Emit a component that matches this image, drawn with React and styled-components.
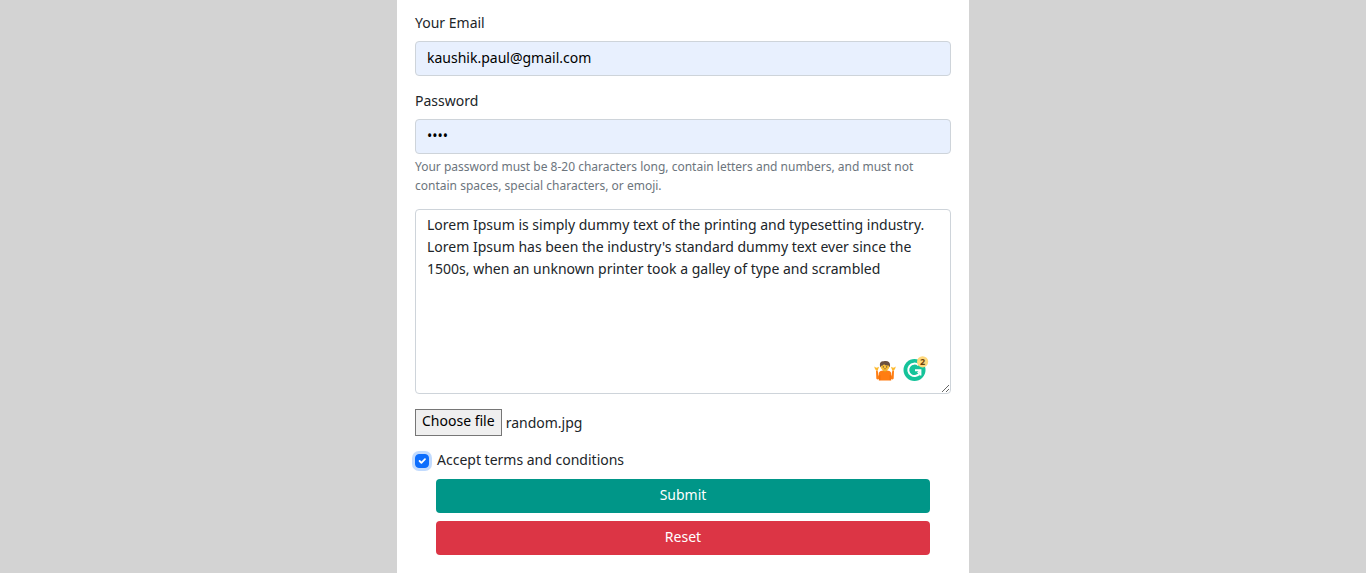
import React, { useState } from 'react';
import styled, { createGlobalStyle } from 'styled-components';

const GlobalStyle = createGlobalStyle`
  *, *::before, *::after { box-sizing: border-box; }
  body {
    margin: 0;
    background: #d3d3d3;
    color: #212529;
    font-family: "Noto Sans", "Open Sans", sans-serif;
    font-size: 14px;
    line-height: 22px;
  }
`;

const Page = styled.main`
  display: flex;
  justify-content: center;
  min-height: 100vh;
`;

const Form = styled.form`
  width: 100%;
  max-width: 572px;
  padding: 12px 18px 18px;
  background: #fff;
`;

const Field = styled.div`
  margin-bottom: 14px;
`;

const Label = styled.label`
  display: block;
  width: fit-content;
  margin-bottom: 7px;
`;

const Input = styled.input`
  display: block;
  width: 100%;
  height: 35px;
  padding: 0 11px 2px;
  border: 1px solid #ced4da;
  border-radius: 4px;
  background: #e8f0fe;
  color: #000;
  font: inherit;
  outline: none;
`;

const Help = styled.p`
  margin: 3px 0 14px;
  color: #6c757d;
  font-size: 12px;
  line-height: 19px;
`;

const MessageBox = styled.div`
  position: relative;
  margin-bottom: 15px;
`;

const Message = styled.textarea`
  display: block;
  width: 100%;
  height: 185px;
  padding: 4px 11px;
  border: 1px solid #ced4da;
  border-radius: 4px;
  background: #fff;
  color: #212529;
  font: inherit;
  resize: vertical;
  outline: none;
`;

const Helpers = styled.div`
  position: absolute;
  right: 22px;
  bottom: 12px;
  display: flex;
  align-items: flex-end;
  gap: 7px;
  pointer-events: none;

  svg { display: block; }
`;

const FileRow = styled.div`
  position: relative;
  display: flex;
  align-items: center;
  gap: 4px;
  margin-bottom: 13px;
`;

const FileInput = styled.input`
  position: absolute;
  width: 1px;
  height: 1px;
  overflow: hidden;
  opacity: 0;
`;

const FileButton = styled.label`
  height: 27px;
  padding: 0 6px;
  border: 1px solid #767676;
  background: #efefef;
  color: #000;
`;

const Terms = styled.div`
  display: flex;
  align-items: flex-end;
  gap: 8px;
  margin-bottom: 8px;
`;

const Checkbox = styled.input`
  appearance: none;
  flex: none;
  width: 14px;
  height: 14px;
  margin: 0 0 3px;
  border: 1px solid #adb5bd;
  border-radius: 4px;
  background: #fff center / 100% no-repeat;
  outline: none;

  &:checked {
    border-color: #0d6efd;
    background-color: #0d6efd;
    background-image: url("data:image/svg+xml,%3Csvg xmlns='http://www.w3.org/2000/svg' viewBox='0 0 20 20'%3E%3Cpath fill='none' stroke='%23fff' stroke-linecap='round' stroke-linejoin='round' stroke-width='3' d='M6 10l3 3l6-6'/%3E%3C/svg%3E");
    box-shadow: 0 0 0 3px rgba(13, 110, 253, 0.25);
  }
`;

const Actions = styled.div`
  display: grid;
  gap: 8px;
  padding: 0 21px;
`;

const Button = styled.button`
  height: 34px;
  padding: 0 11px 2px;
  border: 0;
  border-radius: 4px;
  background: ${({ $color }) => $color};
  color: #fff;
  font: inherit;
`;

const message = `Lorem Ipsum is simply dummy text of the printing and typesetting industry.
Lorem Ipsum has been the industry's standard dummy text ever since the
1500s, when an unknown printer took a galley of type and scrambled`;

function ShrugIcon() {
  return (
    <svg width="22" height="22" viewBox="0 0 22 22" aria-hidden="true">
      <path d="M4.8 20.5V12.8Q5.5 10.8 8.5 10.6H13.5Q16.5 10.8 17.2 12.8V20.5Z" fill="#ff7d12" />
      <path d="M5.6 12.6 4.6 16.2 3.6 10.2 2 10.4 2.3 18.6Q3.6 20.6 6.2 18ZM16.4 12.6 17.4 16.2 18.4 10.2 20 10.4 19.7 18.6Q18.4 20.6 15.8 18Z" fill="#ff7d12" />
      <path d="M3.8 10.2 2 10.5.8 8.6.2 6.6 1.8 7.6 3 7.8 4.6 6.8 4.8 7.4ZM18.2 10.2 20 10.5 21.2 8.6 21.8 6.6 20.2 7.6 19 7.8 17.4 6.8 17.2 7.4Z" fill="#fcb92d" />
      <path d="M9.2 9.5h3.6v1.6q-1.8 1.8-3.6 0Z" fill="#e8981c" />
      <ellipse cx="11" cy="6.4" rx="4.3" ry="4.4" fill="#fcc13a" />
      <path d="M6.4 7.6C5 3.6 6.4.9 9.6 1.3 13.8-.1 17.4 2.4 15.6 7.6L14.8 5.4Q11.4 5.8 10 4.2 8.8 5.8 7.2 5.8Z" fill="#6b5040" />
      <circle cx="9.3" cy="6.9" r=".6" fill="#49372c" />
      <circle cx="12.7" cy="6.9" r=".6" fill="#49372c" />
      <path d="M9.8 9q1.3-.6 2.5 0" fill="none" stroke="#714324" strokeWidth=".6" />
      <path d="M5.8 15v5.2M16.2 15v5.2" stroke="#e06305" strokeWidth=".5" />
    </svg>
  );
}

function CheckerIcon() {
  return (
    <svg width="26" height="26" viewBox="0 0 26 26" role="img" aria-label="2 suggestions">
      <circle cx="11.5" cy="14" r="11" fill="#15c39a" />
      <path d="M15.6 9.2A6.2 6.2 0 1 0 16.9 16.8" fill="none" stroke="#fff" strokeWidth="2" />
      <path d="M12 14.2H17.4V19.6" fill="none" stroke="#fff" strokeWidth="2" />
      <path d="M17.4 14.2 14.6 17" fill="none" stroke="#fff" strokeWidth="1.5" />
      <circle cx="19.6" cy="5.8" r="5.6" fill="#ffd87c" />
      <text x="19.6" y="9" textAnchor="middle" fontFamily="Noto Sans, sans-serif" fontSize="9" fontWeight="700" fill="#6b430f">2</text>
    </svg>
  );
}

export default function App() {
  const [fileName, setFileName] = useState('random.jpg');

  return (
    <>
      <GlobalStyle />
      <Page>
        <Form onSubmit={(e) => e.preventDefault()}>
          <Field>
            <Label htmlFor="email">Your Email</Label>
            <Input id="email" type="email" defaultValue="kaushik.paul@gmail.com" />
          </Field>
          <Label htmlFor="password">Password</Label>
          <Input id="password" type="password" defaultValue="pass" aria-describedby="password-help" />
          <Help id="password-help">
            Your password must be 8-20 characters long, contain letters and numbers, and must not
            <br />
            contain spaces, special characters, or emoji.
          </Help>
          <MessageBox>
            <Message aria-label="Message" spellCheck={false} defaultValue={message} />
            <Helpers>
              <ShrugIcon />
              <CheckerIcon />
            </Helpers>
          </MessageBox>
          <FileRow>
            <FileInput
              id="file"
              type="file"
              onChange={(e) => setFileName(e.target.files[0]?.name ?? 'No file chosen')}
            />
            <FileButton htmlFor="file">Choose file</FileButton>
            <span>{fileName}</span>
          </FileRow>
          <Terms>
            <Checkbox id="terms" type="checkbox" defaultChecked />
            <label htmlFor="terms">Accept terms and conditions</label>
          </Terms>
          <Actions>
            <Button type="submit" $color="#009688">Submit</Button>
            <Button type="reset" $color="#dc3545">Reset</Button>
          </Actions>
        </Form>
      </Page>
    </>
  );
}
